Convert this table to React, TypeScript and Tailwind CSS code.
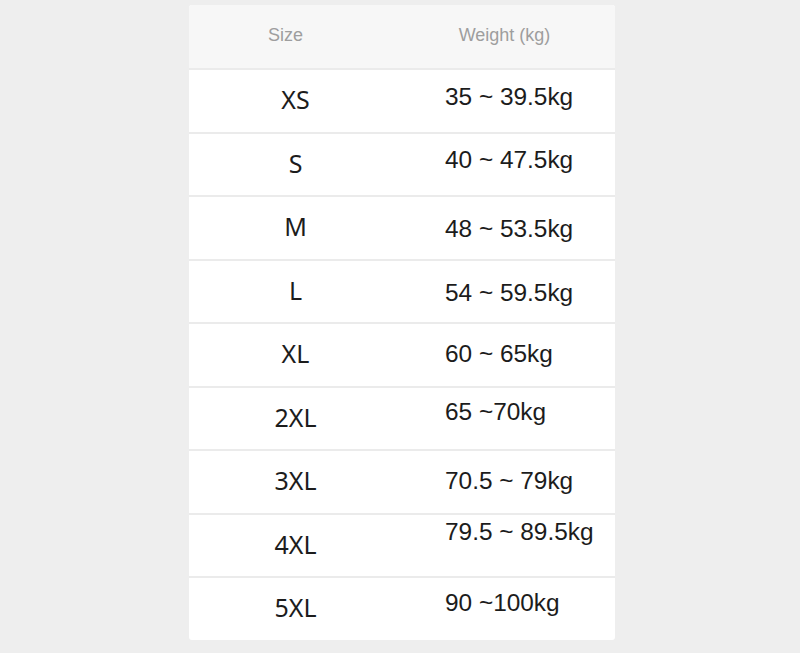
import React from 'react';

const rows = [
  { size: 'XS', weight: '35 ~ 39.5kg', nudge: 'pb-[6px]' },
  { size: 'S', weight: '40 ~ 47.5kg', nudge: 'pb-[8px]' },
  { size: 'M', weight: '48 ~ 53.5kg', nudge: 'pt-[4px]' },
  { size: 'L', weight: '54 ~ 59.5kg', nudge: 'pt-[4px]' },
  { size: 'XL', weight: '60 ~ 65kg', nudge: 'pt-[0px]' },
  { size: '2XL', weight: '65 ~70kg', nudge: 'pb-[12px]' },
  { size: '3XL', weight: '70.5 ~ 79kg', nudge: 'pt-[0px]' },
  { size: '4XL', weight: '79.5 ~ 89.5kg', nudge: 'pb-[26px]' },
  { size: '5XL', weight: '90 ~100kg', nudge: 'pb-[10px]' },
];

export default function App() {
  return (
    <div className="w-[800px] h-[653px] bg-[#eeeeee] pt-[5px] overflow-hidden">
      <div className="ml-[189px] w-[426px] bg-white rounded-[3px] overflow-hidden">
        {/* header */}
        <div className="flex h-[63px] bg-[#f7f7f7] font-['Liberation_Sans',Arial,sans-serif] text-[18px] text-[#9e9e9e]">
          <div className="w-1/2 flex items-center justify-center pr-[20px] pb-[2px]">Size</div>
          <div className="w-1/2 flex items-center justify-center pr-[8px] pb-[2px]">Weight (kg)</div>
        </div>

        {rows.map((r) => (
          <div key={r.size} className="flex h-[63.5px] border-t-2 border-[#ebebeb]">
            <div className="w-1/2 flex items-center justify-center pb-[2px] font-['Noto_Sans',sans-serif] text-[25px] text-[#1c1c1c]">
              {r.size}
            </div>
            <div
              className={`w-1/2 flex items-center pl-[43px] font-['Liberation_Sans',Arial,sans-serif] text-[24.4px] text-[#1c1c1c] ${r.nudge}`}
            >
              {r.weight}
            </div>
          </div>
        ))}
      </div>
    </div>
  );
}
